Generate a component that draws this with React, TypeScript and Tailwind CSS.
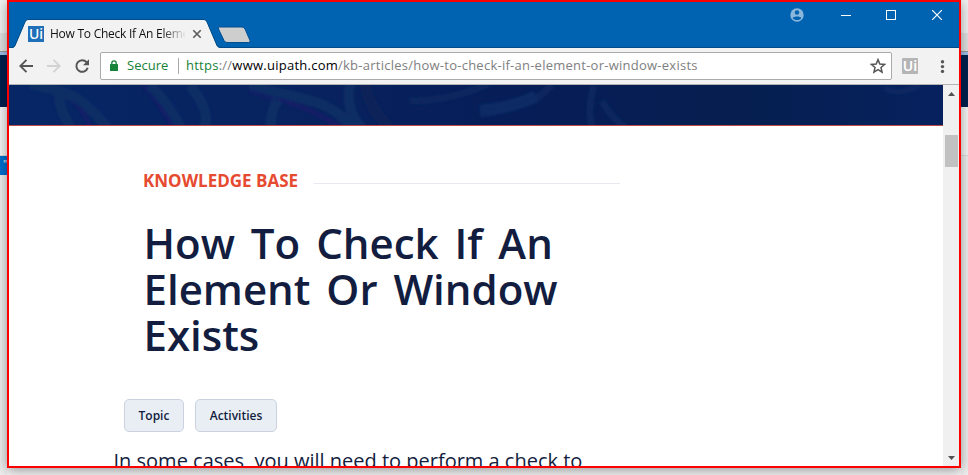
import React from "react";

function Backdrop({ left }: { left?: boolean }) {
  return (
    <div className="flex h-full w-[7px] shrink-0 flex-col bg-[#eeeeee]">
      <div className="h-[33px] bg-[#f2f2f2]" />
      <div className="h-[18px] bg-[#e2e2e2]" />
      <div className="h-px bg-[#9b9b9b]" />
      <div className="h-[3px] bg-[#9fc2ec]" />
      <div className="h-[52px] bg-[#00204f]" />
      <div className="h-[48px] bg-[#f6f6f6]" />
      <div className="h-px bg-[#dcdcdc]" />
      {left ? (
        <div className="h-[19px] bg-[#0070d0] pl-[3px] font-['Open_Sans',sans-serif] text-[10px] leading-[16px] text-white">"</div>
      ) : null}
    </div>
  );
}

function TitleBar() {
  return (
    <div className="flex h-[46px] border-b border-[#004a87] bg-[#0063b1]">
      <div className="relative w-[260px]">
        <svg className="absolute left-0 top-0" width="260" height="48" viewBox="9 2 260 48">
          <path d="M9 50V48H12Q14 48 15 46L25 22Q26 19.5 28 19.5H204Q206 19.5 207 22L217 46Q218 48 221 48V50Z" fill="#f2f2f2" />
          <path d="M9 47.5H12Q14 47.5 15 45.5L25 22Q26 19.5 28 19.5H204Q206 19.5 207 22L217 45.5Q218 47.5 221 47.5" fill="none" stroke="#004a87" />
          <path d="M219.5 27H242Q244 27 245 29L250 40.500Q250.500 42.500 248.500 42.500H227Q225 42.500 224 40.500L218.500 29Q218 27 219.500 27Z" fill="#cecece" stroke="#004f91" strokeWidth="1" />
        </svg>
        <div className="relative flex h-full items-start pl-[19px] pt-[24px]">
          <div className="h-4 w-4 bg-[#1f70b8] text-center font-['Noto_Sans',sans-serif] text-[14px] font-medium leading-[16px] text-white">Ui</div>
          <div className="ml-[6px] h-4 w-[136px] overflow-hidden whitespace-nowrap font-['Open_Sans',sans-serif] text-[12px] leading-[16px] tracking-[-0.25px] text-[#111] [mask-image:linear-gradient(to_right,black_82%,transparent)]">How To Check If An Element</div>
          <svg className="ml-[6px] mt-[3px]" width="10" height="10" viewBox="0 0 10 10"><path d="M1.300 1.300l7.400 7.400M8.700 1.300l-7.400 7.400" stroke="#5a5a5a" strokeWidth="1.600" /></svg>
        </div>
      </div>
      <div className="flex flex-1 items-start justify-end pr-[17px] pt-[6px]">
        <svg width="14" height="14" viewBox="0 0 14 14"><circle cx="7" cy="7" r="6.700" fill="#8cb7dc" /><circle cx="7" cy="4.500" r="2.200" fill="#0063b1" /><path d="M2.700 10C4 8 10 8 11.300 10 10 12.700 4 12.700 2.700 10Z" fill="#0063b1" /></svg>
        <svg className="ml-[37px]" width="10" height="14"><path d="M0 7.500h10" stroke="white" /></svg>
        <svg className="ml-[35px] mt-[2px]" width="10" height="10"><rect x=".5" y=".5" width="9" height="9" fill="none" stroke="white" /></svg>
        <svg className="ml-[36px] mt-[2px]" width="10" height="10" viewBox="0 0 10 10"><path d="M0 0l10 10M10 0L0 10" stroke="white" strokeWidth="1.200" /></svg>
      </div>
    </div>
  );
}

function Toolbar() {
  return (
    <div className="flex h-[37px] items-start border-b border-[#b3b3b3] bg-[#f2f2f2] pl-[10px] pt-[4px]">
      <svg className="mt-[7px]" width="74" height="16" viewBox="0 0 74 16" fill="none">
        <path d="M14 7H1.500M7.500 .8L1.300 7l6.200 6.200" stroke="#555" strokeWidth="1.900" />
        <path d="M28 7H40.500M34.500 .8L40.700 7l-6.200 6.200" stroke="#d3d3d3" strokeWidth="1.900" />
        <path d="M67.600 3.200A5.800 5.800 0 1 0 68.700 8.700" stroke="#555" strokeWidth="2" />
        <path d="M70 .3V6.300H64Z" fill="#555" />
      </svg>
      <div className="ml-[7px] flex h-[28px] w-[792px] items-center rounded-[2px] border border-[#a9a9a9] bg-white font-['Open_Sans',sans-serif] text-[13px]">
        <svg className="ml-[9px]" width="8" height="12" viewBox="0 0 8 12"><rect y="4" width="8" height="7" rx=".6" fill="#178239" /><path d="M1.800 5V3a2.200 2.200 0 0 1 4.400 0V5" fill="none" stroke="#178239" strokeWidth="1.300" /></svg>
        <span className="ml-[9px] w-[51px] whitespace-nowrap pb-px text-[#178239]">Secure</span>
        <span className="h-[16px] w-px bg-[#a9a9a9]" />
        <span className="ml-[7px] whitespace-nowrap pb-px tracking-[0.25px] text-[#808080]"><span className="text-[#178239]">https</span>://<span className="text-black">www.uipath.com</span>/kb-articles/how-to-check-if-an-element-or-window-exists</span>
        <svg className="ml-auto mr-[5px]" width="16" height="16" viewBox="0 0 15 15"><path d="M7.500 1.500L9.200 5.600 13.700 6 10.300 8.900 11.300 13.300 7.500 11 3.700 13.300 4.700 8.900 1.300 6 5.800 5.600Z" fill="none" stroke="#555" strokeWidth="1.400" /></svg>
      </div>
      <div className="ml-[10px] mt-[6px] h-4 w-4 rounded-[1px] bg-[#b5b5b5] text-center font-['Noto_Sans',sans-serif] text-[14px] font-semibold leading-[16px] text-white">Ui</div>
      <svg className="ml-[22px] mt-[8px]" width="5" height="14"><g fill="#555"><circle cx="2.500" cy="1.800" r="1.700" /><circle cx="2.500" cy="6.600" r="1.700" /><circle cx="2.500" cy="11.400" r="1.700" /></g></svg>
    </div>
  );
}

function Banner() {
  return (
    <svg className="block shrink-0" width="934" height="41" viewBox="9 85 934 41">
      <defs><linearGradient id="sea"><stop stopColor="#062665" /><stop offset=".35" stopColor="#08225e" /><stop offset=".55" stopColor="#061d57" /><stop offset=".78" stopColor="#061f50" /><stop offset="1" stopColor="#06215e" /></linearGradient><filter id="soft" x="-5%" y="-50%" width="110%" height="200%"><feGaussianBlur stdDeviation="1.800" /></filter></defs>
      <rect x="9" y="85" width="934" height="41" fill="url(#sea)" />
      <g filter="url(#soft)" fill="none">
        <path d="M55 85Q52 101 68 128M68 98Q80 103 91 128M144 85Q160 104 174 128M250 91Q310 106 341 128" stroke="#131c68" strokeWidth="4" />
        <path d="M30 84Q64 91 76 98T108 128M60 88Q56 105 71 128M150 85Q168 103 181 128M190 85Q213 115 203 128M250 84C280 96 305 96 325 106S343 120 352 128M278 100Q270 112 271 128M350 83Q345 112 362 128" stroke="#0d2d65" strokeWidth="10" />
        <path d="M365 84Q370 110 390 128" stroke="#082059" strokeWidth="12" />
        <path d="M410 101Q450 101 488 84M532 101Q545 93 552 84M594 86Q587 108 592 128M602 101Q610 117 626 128" stroke="#09275f" strokeWidth="7" />
        <path d="M480 111Q515 107 536 96" stroke="#0a2c65" strokeWidth="12" />
        <path d="M885 89Q900 96 920 85" stroke="#0a2862" strokeWidth="6" />
      </g>
      <path d="M9 125.500H943" stroke="#c04a45" />
    </svg>
  );
}

function Article() {
  return (
    <div className="flex min-h-0 flex-1 flex-col overflow-hidden bg-white font-['Open_Sans',sans-serif] text-[#121d40]">
      <div className="mt-[43px] flex h-[24px] shrink-0 items-center pl-[134px]">
        <span className="w-[171px] whitespace-nowrap text-[17px] font-bold leading-[24px] text-[#e64a30]">KNOWLEDGE BASE</span>
        <span className="mt-[5px] h-px w-[306px] bg-[#e8e8f2]" />
      </div>
      <h1 className="mt-[27px] shrink-0 whitespace-nowrap pl-[134.5px] text-[42px] font-semibold leading-[46px] [word-spacing:5px]">How To Check If An<br />Element Or Window<br />Exists</h1>
      <div className="mt-[41px] flex shrink-0 gap-[11px] pl-[115px] text-[12px] font-semibold">
        <span className="flex h-[33px] w-[60px] items-center justify-center rounded-[5px] border border-[#cbd2de] bg-[#e9eef5]">Topic</span>
        <span className="flex h-[33px] w-[82px] items-center justify-center rounded-[5px] border border-[#cbd2de] bg-[#e9eef5]">Activities</span>
      </div>
      <p className="mt-[14px] shrink-0 whitespace-nowrap pl-[104.5px] text-[20px] leading-[30px]">In some cases, you will need to perform a check to</p>
    </div>
  );
}

export default function App() {
  return (
    <div className="flex h-[475px] w-[968px] items-start overflow-hidden bg-[#f4f4f4]">
      <Backdrop left />
      <main className="z-10 flex h-[468px] w-[954px] shrink-0 flex-col border-2 border-[#ff0000] bg-white shadow-[0_2px_12px_rgba(0,0,0,0.4)]">
        <TitleBar />
        <Toolbar />
        <div className="flex min-h-0 flex-1">
          <div className="flex w-[934px] flex-col"><Banner /><Article /></div>
          <div className="flex w-[16px] flex-col items-center bg-[#f0f0f0] pl-px">
            <svg className="mt-[7px]" width="7" height="4"><path d="M0 4L3.500 0 7 4Z" fill="#505050" /></svg>
            <div className="mt-[39px] h-[32px] w-[13px] bg-[#c1c1c1]" />
            <svg className="mb-[6px] mt-auto" width="7" height="4"><path d="M0 0L3.500 4 7 0Z" fill="#505050" /></svg>
          </div>
        </div>
      </main>
      <Backdrop />
    </div>
  );
}
